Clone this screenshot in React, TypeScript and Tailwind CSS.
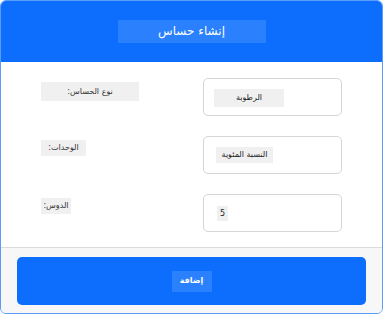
export default function App() {
  const rows = [
    { label: "نوع الحساس:", labelW: "w-[98px] h-[19px]", value: "الرطوبة", valueBox: "w-[70px] h-[18px] mt-[10px] ml-[10px] justify-center" },
    { label: "الوحدات:", labelW: "w-[45px] h-[16px]", value: "النسبة المئوية", valueBox: "w-[57px] h-[16px] mt-[10px] ml-[12px] justify-center" },
    { label: "الدوس:", labelW: "w-[30px] h-[16px]", value: "5", valueBox: "w-[11px] h-[15px] mt-[11px] ml-[13px] justify-center" },
  ];
  return (
    <div className="h-[314px] w-[383px] bg-white font-['DejaVu_Sans',sans-serif]" dir="ltr">
      <div className="flex h-[314px] flex-col overflow-hidden rounded-[6px] border border-[#5b9cf8]">
        <div className="flex h-[61px] items-center justify-center bg-[#0d6efd]">
          <div className="-mt-[1px] flex h-[23px] w-[148px] items-center justify-center bg-[#2a80fd] text-[12px] text-white" dir="rtl">
            إنشاء حساس
          </div>
        </div>
        <div className="flex flex-col gap-[20px] bg-white px-[40px] pt-[16px] pb-[15px]">
          {rows.map((r) => (
            <div key={r.label} className="flex justify-between">
              <div className={`mt-[4px] flex items-center justify-center bg-[#f0f0f0] text-[8px] text-[#333] ${r.labelW}`} dir="rtl">
                {r.label}
              </div>
              <div className="h-[38px] w-[139px] rounded-[5px] border border-[#d6d6d6] bg-white">
                <div className={`flex items-center bg-[#f0f0f0] text-[8px] text-[#222] ${r.valueBox}`} dir="rtl">
                  {r.value}
                </div>
              </div>
            </div>
          ))}
        </div>
        <div className="flex flex-1 items-start border-t border-[#dcdcdc] bg-[#f7f7f7] px-[16px] pt-[9px]">
          <button className="flex h-[48px] w-full items-center justify-center rounded-[5px] bg-[#0d6efd]">
            <span className="flex h-[21px] w-[40px] items-center justify-center bg-[#2a80fd] text-[8px] font-bold text-white" dir="rtl">
              إضافة
            </span>
          </button>
        </div>
      </div>
    </div>
  );
}
